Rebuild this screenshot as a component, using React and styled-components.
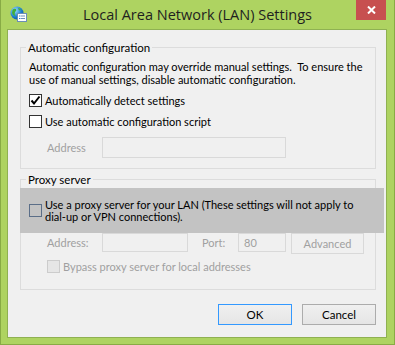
import React from "react";
import styled, { createGlobalStyle } from "styled-components";

const FONT = `Lato, "Liberation Sans", sans-serif`;
const TITLE_FONT = `"Open Sans", "Noto Sans", sans-serif`;

const Global = createGlobalStyle`
  html, body { margin: 0; padding: 0; background: #aed361; }
  * { box-sizing: border-box; }
`;

const Frame = styled.div`
  width: 395px;
  height: 345px;
  background: #aed361;
  border: 1px solid #88ab45;
  border-top: none;
  display: flex;
  flex-direction: column;
  font-family: ${FONT};
  font-size: 11px;
  color: #000;
  overflow: hidden;
`;

const TitleBar = styled.div`
  height: 29px;
  flex: none;
  display: grid;
  grid-template-columns: 1fr auto 1fr;
  align-items: start;
`;

const AppIcon = styled.svg`
  margin: 6px 0 0 9px;
  width: 17px;
  height: 16px;
`;

const Title = styled.div`
  font-family: ${TITLE_FONT};
  font-size: 14.5px;
  line-height: 30px;
  color: #1f1f1f;
  white-space: nowrap;
`;

const Close = styled.div`
  justify-self: end;
  margin-right: 8px;
  width: 30px;
  height: 20px;
  background: #c75050;
  display: flex;
  align-items: center;
  justify-content: center;
`;

const Body = styled.div`
  flex: 1;
  display: flex;
  padding: 0 7px 6px 6px;
  min-height: 0;
`;

const Client = styled.div`
  flex: 1;
  min-width: 0;
  background: #f0f0f0;
  border: 1px solid #8fb152;
  padding: 10px 10px 0 12px;
  display: flex;
  flex-direction: column;
`;

const Group = styled.fieldset`
  margin: ${(p) => p.$mt || 0}px 0 0 0;
  border: 1px solid #dcdcdc;
  padding: ${(p) => p.$pt || 0}px 8px ${(p) => p.$pb || 0}px 8px;
  min-width: 0;
`;

const Legend = styled.legend`
  padding: 0 2px;
  margin-left: -3px;
  line-height: 15px;
  font-size: 11.5px;
  color: #000;
`;

const Desc = styled.div`
  line-height: 13px;
  white-space: nowrap;
`;

const CheckRow = styled.label`
  display: flex;
  align-items: center;
  gap: 3px;
  margin-top: ${(p) => p.$mt || 0}px;
  margin-left: ${(p) => p.$ml || 0}px;
  line-height: 13px;
  white-space: nowrap;
  color: ${(p) => (p.$disabled ? "#a0a0a0" : "#000")};
`;

const Box = styled.span`
  flex: none;
  width: 13px;
  height: 13px;
  border: 1px solid ${(p) => p.$border || "#333333"};
  background: ${(p) => p.$bg || "#ffffff"};
  display: flex;
  align-items: center;
  justify-content: center;
`;

const Highlight = styled.div`
  margin: 1px -17px 0 -9px;
  height: 45px;
  padding-left: 9px;
  background: #c3c3c3;
  display: flex;
  align-items: center;
  gap: 3px;
  line-height: 12px;
  white-space: nowrap;
`;

const FieldRow = styled.div`
  display: flex;
  align-items: flex-start;
  margin-top: ${(p) => p.$mt || 0}px;
  padding-left: 18px;
`;

const FieldLabel = styled.span`
  width: ${(p) => p.$w}px;
  margin-left: ${(p) => p.$ml || 0}px;
  line-height: ${(p) => p.$lh || 19}px;
  color: #a0a0a0;
  flex: none;
`;

const TextBox = styled.div`
  width: ${(p) => p.$w}px;
  height: ${(p) => p.$h || 19}px;
  border: 1px solid #d9d9d9;
  background: #f0f0f0;
  color: #a0a0a0;
  padding-left: 5px;
  line-height: ${(p) => (p.$h || 19) - 2}px;
  flex: none;
`;

const DisabledButton = styled.div`
  margin-left: 5px;
  width: 73px;
  height: 21px;
  border: 1px solid #d9d9d9;
  background: #f0f0f0;
  color: #a0a0a0;
  text-align: center;
  line-height: 19px;
  flex: none;
`;

const Buttons = styled.div`
  display: flex;
  justify-content: flex-end;
  gap: 10px;
  margin-top: 14px;
`;

const Button = styled.button`
  width: 74px;
  height: 21px;
  padding: 0;
  font-family: ${FONT};
  font-size: 11.5px;
  color: #000;
  border: 1px solid ${(p) => (p.$default ? "#3399ff" : "#acacac")};
  background: linear-gradient(#f0f0f0, #e5e5e5);
  line-height: 19px;
`;

function Check({ checked }) {
  return (
    <Box>
      {checked && (
        <svg width="11" height="11" viewBox="0 0 11 11">
          <path d="M1.5 5.5 L4 8.5 L9.5 1.5" fill="none" stroke="#000" strokeWidth="2" />
        </svg>
      )}
    </Box>
  );
}

export default function App() {
  return (
    <>
      <Global />
      <Frame>
        <TitleBar>
          <AppIcon viewBox="0 0 17 16">
            <defs>
              <radialGradient id="g" cx="0.35" cy="0.3" r="0.8">
                <stop offset="0" stopColor="#9fe0ff" />
                <stop offset="0.6" stopColor="#1d7fd0" />
                <stop offset="1" stopColor="#0b4f99" />
              </radialGradient>
            </defs>
            <circle cx="7" cy="7" r="6.5" fill="url(#g)" />
            <path d="M2.5 4 Q4 2 6 3 Q7 5 5 6 Q4 8 5.5 10 Q3 10 2 7 Z" fill="#3fae3a" />
            <path d="M8 2 Q10 2 11 4 L9 4.5 Z" fill="#3fae3a" />
            <rect x="7.5" y="7.5" width="9" height="8" fill="#ffffff" stroke="#6b8fb5" strokeWidth="1" />
            <rect x="9" y="9.5" width="1.5" height="1" fill="#2a7fd4" />
            <rect x="11" y="9.5" width="4" height="1" fill="#6a8fb8" />
            <rect x="9" y="12" width="1.5" height="1" fill="#2a7fd4" />
            <rect x="11" y="12" width="4" height="1" fill="#6a8fb8" />
          </AppIcon>
          <Title>Local Area Network (LAN) Settings</Title>
          <Close>
            <svg width="9" height="8" viewBox="0 0 9 8">
              <path d="M1 0.5 L8 7.5 M8 0.5 L1 7.5" stroke="#fff" strokeWidth="2" />
            </svg>
          </Close>
        </TitleBar>
        <Body>
          <Client>
            <Group $pt={5} $pb={10}>
              <Legend>Automatic configuration</Legend>
              <Desc>
                Automatic configuration may override manual settings.&nbsp; To ensure the
                <br />
                use of manual settings, disable automatic configuration.
              </Desc>
              <CheckRow $mt={8}>
                <Check checked />
                Automatically detect settings
              </CheckRow>
              <CheckRow $mt={8}>
                <Check />
                Use automatic configuration script
              </CheckRow>
              <FieldRow $mt={9}>
                <FieldLabel $w={55} $lh={21}>Address</FieldLabel>
                <TextBox $w={184} $h={21} />
              </FieldRow>
            </Group>
            <Group $mt={3} $pt={0} $pb={16}>
              <Legend>Proxy server</Legend>
              <Highlight>
                <Box $border="#5b6e88" $bg="transparent" />
                <span>
                  Use a proxy server for your LAN (These settings will not apply to
                  <br />
                  dial-up or VPN connections).
                </span>
              </Highlight>
              <FieldRow>
                <FieldLabel $w={55}>Address:</FieldLabel>
                <TextBox $w={86} />
                <FieldLabel $w={36} $ml={14}>Port:</FieldLabel>
                <TextBox $w={48}>80</TextBox>
                <DisabledButton>Advanced</DisabledButton>
              </FieldRow>
              <CheckRow $mt={6} $ml={18} $disabled>
                <Box $border="#cccccc" $bg="#e6e6e6" />
                Bypass proxy server for local addresses
              </CheckRow>
            </Group>
            <Buttons>
              <Button $default>OK</Button>
              <Button>Cancel</Button>
            </Buttons>
          </Client>
        </Body>
      </Frame>
    </>
  );
}
